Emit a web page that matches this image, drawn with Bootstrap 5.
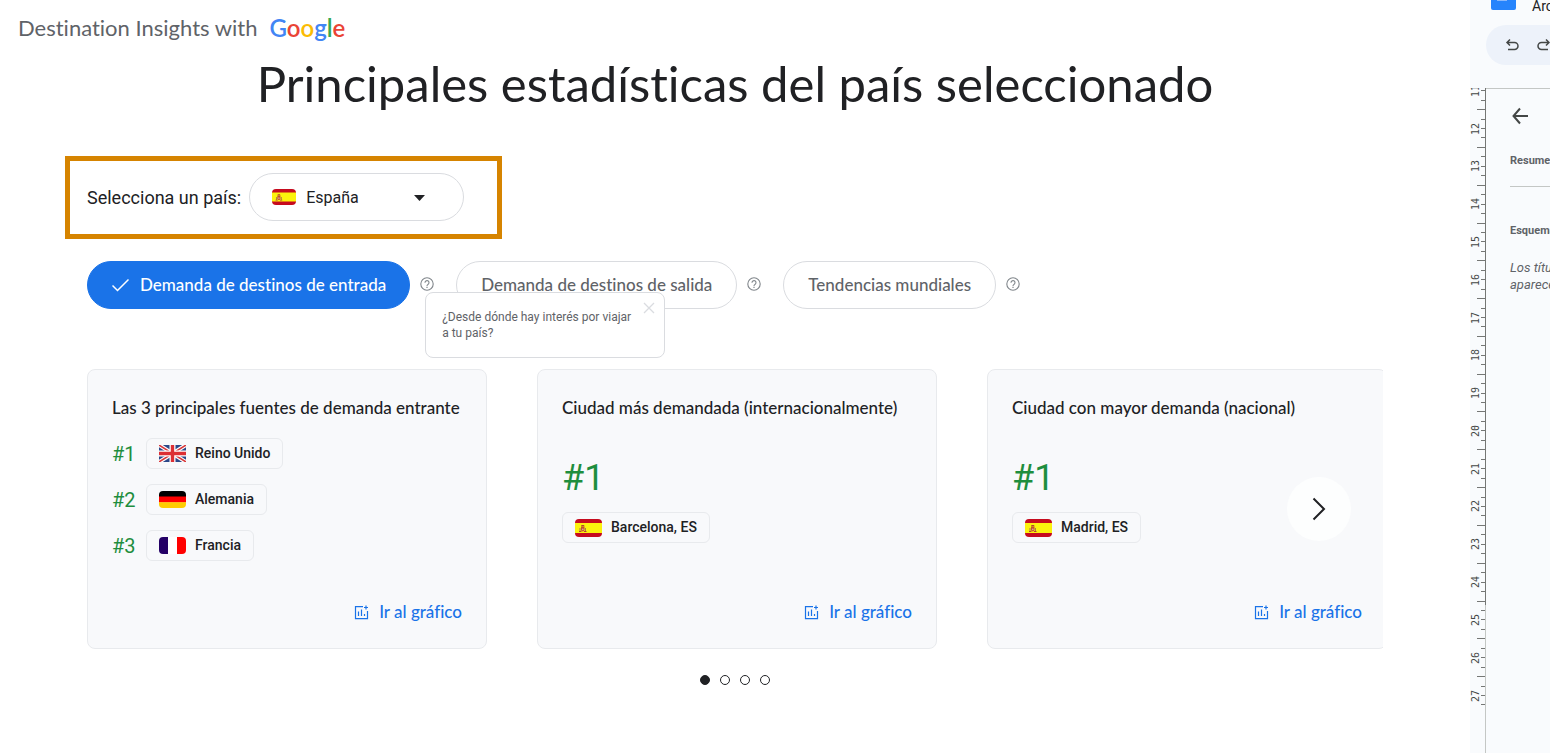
<!DOCTYPE html>
<html lang="es">
<head>
<meta charset="utf-8">
<meta name="viewport" content="width=device-width, initial-scale=1">
<title>Destination Insights with Google</title>
<link rel="stylesheet" href="https://cdn.jsdelivr.net/npm/bootstrap@5.3.0/dist/css/bootstrap.min.css">
<style>
  :root { --ink: #202124; --muted: #5f6368; --blue: #1a73e8; --green: #1e8e3e; --line: #dadce0; --soft: #e8eaed; }
  body { font-family: Roboto, "Liberation Sans", sans-serif; color: var(--ink); background: #fff; }
  svg { display: block; flex: none; }
  main { min-width: 0; }
  .display-font { font-family: Lato, Roboto, sans-serif; font-variant-ligatures: no-common-ligatures; }
  .site-head { padding: 12px 18px 0; font-size: 22px; line-height: 32px; color: var(--muted); gap: 12px; }
  .logo { font-size: 24px; font-weight: 600; }
  .c-blue { color: #4285f4; } .c-red { color: #ea4335; } .c-yellow { color: #fbbc04; } .c-green { color: #34a853; }
  h1 { font-size: 49px; line-height: 56px; font-weight: 400; margin: 11px 0 45px; text-align: center; }
  .content { padding: 0 87px; }
  .country-box { border: 5px solid #d68400; padding: 12px 33px 13px 17px; margin-left: -22px; gap: 8px; }
  .country-box label { font-size: 18px; }
  .country { width: 215px; }
  .country select { width: 100%; height: 48px; border: 1px solid var(--line); border-radius: 24px; background: #fff; padding: 2px 56px 0; font-size: 16px; color: var(--ink); appearance: none; }
  .country .flag { position: absolute; left: 23px; top: 16px; }
  .country .caret { position: absolute; right: 39px; top: 22px; }
  .tabs { margin-top: 22px; }
  .pill { height: 48px; border: 1px solid var(--line); border-radius: 24px; background: #fff; color: var(--muted); font-size: 17px; font-weight: 500; padding: 0 24px; gap: 11px; white-space: nowrap; }
  .pill.on { background: var(--blue); border-color: var(--blue); color: #fff; padding-right: 23px; }
  .help { margin: 0 22px 2px 10px; }
  .bare { border: 0; padding: 0; background: none; }
  .tip { position: absolute; left: 5px; top: 15px; z-index: 2; width: 240px; background: #fff; border: 1px solid var(--line); border-radius: 8px; padding: 16px; font-size: 12px; line-height: 16px; color: var(--muted); white-space: nowrap; }
  .tip p { margin-bottom: 0; }
  .tip button { position: absolute; right: 9px; top: 9px; }
  .deck { margin-top: 60px; gap: 50px; overflow: hidden; }
  .tile { flex: 0 0 400px; min-height: 280px; background: #f8f9fb; border: 1px solid var(--soft); border-radius: 8px; padding: 26px 24px 24px; }
  .tile h2 { font-size: 17px; line-height: 24px; font-weight: 500; margin: 0; white-space: nowrap; }
  .ranks { margin: 18px 0 0; padding: 0; list-style: none; gap: 15px; }
  .rank { color: var(--green); font-size: 20px; line-height: 24px; width: 34px; }
  .big-rank { color: var(--green); font-size: 36px; line-height: 40px; margin: 38px 0 14px; }
  .chip { height: 31px; border: 1px solid var(--soft); border-radius: 6px; padding: 0 12px; gap: 9px; font-size: 14px; font-weight: 500; }
  .go { color: var(--blue); font-size: 17px; line-height: 24px; font-weight: 500; gap: 10px; text-decoration: none; }
  .next { position: absolute; right: 32px; top: 50%; margin-top: -32px; width: 64px; height: 64px; border-radius: 50%; background: #fdfefe; }
  .dots { margin-top: 26px; gap: 10px; }
  .dots button { width: 10px; height: 10px; border: 1px solid var(--ink); border-radius: 50%; padding: 0; background: #fff; }
  .dots .now { background: var(--ink); }
  .doc { flex: 0 0 80px; overflow: hidden; background: #f9fbfd; white-space: nowrap; color: #444746; }
  .doc-head { height: 25px; padding-left: 21px; gap: 16px; color: var(--ink); font-size: 14px; line-height: 12px; }
  .doc-tools { height: 40px; width: 120px; margin: 0 0 23px 16px; padding-left: 18px; border-radius: 20px; background: #edf2fa; gap: 16px; }
  .outline { border-top: 1px solid #c4c7c5; padding: 18px 0 0 24px; width: 120px; color: var(--muted); font-size: 11px; line-height: 16px; }
  .outline h3 { font-size: 11px; line-height: 16px; font-weight: 700; margin: 28px 0 17px; }
  .outline hr { margin: 0 0 36px; opacity: 1; border-color: #c4c7c5; }
  .outline p { font-size: 13px; line-height: 17px; font-style: italic; margin: 20px 0 0; }
  .ruler text { font: 400 10px "DejaVu Sans Mono", monospace; fill: #444746; }
</style>
</head>
<body>
<svg width="0" height="0" class="position-absolute" aria-hidden="true">
  <symbol id="es" viewBox="0 0 27 18"><path fill="#c60b1e" d="M0 0h27v18H0z"/><path fill="#fbf20d" d="M0 4h27v10H0z"/><path d="M4.500 9h1v3.500h-1zM10 9h1v3.500h-1z" fill="#a8794c"/><path d="M6 7.500h3.500v3.500a1.800 1.800 0 0 1-3.500 0z" fill="#c3512d"/><path d="M6.500 6h2.500l.6 1.200H6zM4 12h2.500v1H4zM9 12h2.500v1H9z" fill="#b5432c"/><circle cx="7.800" cy="10.300" r=".9" fill="#d9a8a0"/></symbol>
  <symbol id="uk" viewBox="0 0 27 17"><path fill="#2b4788" d="M0 0h27v17H0z"/><path d="M0 0l27 17M27 0L0 17" stroke="#fff" stroke-width="4"/><path d="M0 0l27 17M27 0L0 17" stroke="#d8383a" stroke-width="1.500"/><path d="M13.500 0v17M0 8.500h27" stroke="#fff" stroke-width="6"/><path d="M13.500 0v17M0 8.500h27" stroke="#dc2f34" stroke-width="3.400"/></symbol>
  <symbol id="de" viewBox="0 0 27 17"><path d="M0 0h27v6H0z"/><path fill="#f00" d="M0 5.500h27v6H0z"/><path fill="#fc0" d="M0 11.300h27V17H0z"/></symbol>
  <symbol id="fr" viewBox="0 0 27 17"><path fill="#fff" d="M0 0h27v17H0z"/><path fill="#240066" d="M0 0h9v17H0z"/><path fill="#f00" d="M18 0h9v17h-9z"/></symbol>
  <symbol id="q" viewBox="0 0 14 14"><circle cx="7" cy="7" r="6.200" fill="none" stroke="#80868b" stroke-width="1.100"/><path d="M5 5.700a2 2 0 1 1 3.200 1.500C7.400 7.800 7 8 7 8.900" fill="none" stroke="#80868b" stroke-width="1.100"/><path d="M6.400 9.800h1.200V11H6.400z" fill="#80868b"/></symbol>
  <symbol id="chart" viewBox="0 0 15 15"><path d="M9 1.700H1.500v12h12V6" fill="none" stroke="#1a73e8" stroke-width="1.200"/><path d="M4.500 6.500V11M7.500 4.500V11M10.500 9v2M12 .5v4M10 2.500h4" fill="none" stroke="#1a73e8" stroke-width="1.200"/></symbol>
</svg>

<div class="d-flex min-vh-100">
  <main class="flex-grow-1">
    <header class="site-head display-font d-flex">
      <span>Destination Insights with</span>
      <span class="logo"><span class="c-blue">G</span><span class="c-red">o</span><span class="c-yellow">o</span><span class="c-blue">g</span><span class="c-green">l</span><span class="c-red">e</span></span>
    </header>
    <h1 class="display-font">Principales estadísticas del país seleccionado</h1>

    <div class="content">
      <div class="country-box d-inline-flex align-items-center align-top">
        <label for="country">Selecciona un país:</label>
        <div class="country position-relative">
          <select id="country"><option>España</option></select>
          <svg class="flag rounded-1" width="24" height="16"><use href="#es"/></svg>
          <svg class="caret" width="11" height="6" viewBox="0 0 11 6"><path d="M0 0h11L5.500 6z" fill="#202124"/></svg>
        </div>
      </div>

      <div class="tabs d-flex align-items-center">
        <button class="pill on display-font d-flex align-items-center"><svg width="17" height="14" viewBox="0 0 17 14" fill="none" stroke="#fff" stroke-width="1.500"><path d="M.5 7.500l5 5L16.500 1.500"/></svg>Demanda de destinos de entrada</button>
        <div class="help position-relative">
          <button class="bare d-block" aria-label="Ayuda"><svg width="14" height="14"><use href="#q"/></svg></button>
          <div class="tip" role="tooltip">
            <p>¿Desde dónde hay interés por viajar<br>a tu país?</p>
            <button class="bare" aria-label="Cerrar"><svg width="12" height="12" viewBox="0 0 12 12" stroke="#dadce0" stroke-width="1.300"><path d="M1 1l10 10M11 1L1 11"/></svg></button>
          </div>
        </div>
        <button class="pill display-font">Demanda de destinos de salida</button>
        <button class="help bare" aria-label="Ayuda"><svg width="14" height="14"><use href="#q"/></svg></button>
        <button class="pill display-font">Tendencias mundiales</button>
        <button class="help bare" aria-label="Ayuda"><svg width="14" height="14"><use href="#q"/></svg></button>
      </div>

      <div class="position-relative">
        <div class="deck d-flex">
          <section class="tile d-flex flex-column">
            <h2 class="display-font">Las 3 principales fuentes de demanda entrante</h2>
            <ol class="ranks d-flex flex-column">
              <li class="d-flex align-items-center"><span class="rank">#1</span><span class="chip d-flex align-items-center"><svg width="27" height="17"><use href="#uk"/></svg>Reino Unido</span></li>
              <li class="d-flex align-items-center"><span class="rank">#2</span><span class="chip d-flex align-items-center"><svg class="rounded-1" width="27" height="17"><use href="#de"/></svg>Alemania</span></li>
              <li class="d-flex align-items-center"><span class="rank">#3</span><span class="chip d-flex align-items-center"><svg class="rounded-1" width="27" height="17"><use href="#fr"/></svg>Francia</span></li>
            </ol>
            <a href="#" class="go display-font d-flex align-items-center align-self-end mt-auto"><svg width="15" height="15"><use href="#chart"/></svg>Ir al gráfico</a>
          </section>
          <section class="tile d-flex flex-column">
            <h2 class="display-font">Ciudad más demandada (internacionalmente)</h2>
            <div class="big-rank">#1</div>
            <span class="chip d-flex align-items-center align-self-start"><svg class="rounded-1" width="27" height="18"><use href="#es"/></svg>Barcelona, ES</span>
            <a href="#" class="go display-font d-flex align-items-center align-self-end mt-auto"><svg width="15" height="15"><use href="#chart"/></svg>Ir al gráfico</a>
          </section>
          <section class="tile d-flex flex-column">
            <h2 class="display-font">Ciudad con mayor demanda (nacional)</h2>
            <div class="big-rank">#1</div>
            <span class="chip d-flex align-items-center align-self-start"><svg class="rounded-1" width="27" height="18"><use href="#es"/></svg>Madrid, ES</span>
            <a href="#" class="go display-font d-flex align-items-center align-self-end mt-auto"><svg width="15" height="15"><use href="#chart"/></svg>Ir al gráfico</a>
          </section>
        </div>
        <button class="next bare d-flex align-items-center justify-content-center" aria-label="Siguiente"><svg width="14" height="24" viewBox="0 0 14 24" fill="none" stroke="#202124" stroke-width="2"><path d="M1.500 1.500L12 12 1.500 22.500"/></svg></button>
      </div>

      <div class="dots d-flex justify-content-center">
        <button class="now" aria-label="1"></button><button aria-label="2"></button><button aria-label="3"></button><button aria-label="4"></button>
      </div>
    </div>
  </main>

  <aside class="doc d-flex flex-column">
    <div class="doc-head d-flex">
      <svg width="25" height="10" viewBox="0 0 25 10"><path d="M0 0h25v8a2 2 0 0 1-2 2H2a2 2 0 0 1-2-2z" fill="#2684fc"/><path d="M6 0h10v1H6z" fill="#8ab8fb"/></svg>
      <span>Archivo</span>
    </div>
    <div class="doc-tools d-flex align-items-center">
      <svg width="16" height="16" viewBox="0 0 16 16" fill="none" stroke="#444746" stroke-width="1.500"><path d="M6 2.500L3 5.500l3 3M3 5.500h7.500a3.200 3.200 0 0 1 0 7H4"/></svg>
      <svg width="16" height="16" viewBox="0 0 16 16" fill="none" stroke="#444746" stroke-width="1.500"><path d="M10 2.500l3 3-3 3M13 5.500H5.500a3.200 3.200 0 0 0 0 7H12"/></svg>
    </div>
    <div class="d-flex flex-grow-1">
      <svg class="ruler" id="ruler" width="16" height="665" viewBox="0 88 16 665"></svg>
      <div class="outline">
        <svg width="18" height="18" viewBox="0 0 18 18" fill="none" stroke="#444746" stroke-width="2"><path d="M10 1.500L3.500 9l6.500 7.500M3 9h15"/></svg>
        <h3>Resumen</h3>
        <hr>
        <h3>Esquema</h3>
        <p>Los títulos<br>aparecerán</p>
      </div>
    </div>
  </aside>
</div>

<script src="https://cdn.jsdelivr.net/npm/bootstrap@5.3.0/dist/js/bootstrap.bundle.min.js"></script>
<script>
  // Vertical ruler: four ticks per centimetre, a long one at each half.
  const cm = 37.8, y11 = 90.7;
  let ticks = '', labels = '';
  for (let i = 0; i <= 65; i++) {
    const y = Math.round(y11 + i * cm / 4 - 0.5), long = i % 4 === 2;
    if (y < 706) ticks += `<path d="M${long ? 7 : 11} ${y + 0.5}H15" stroke="#757775"/>`;
  }
  for (let n = 11; n <= 27; n++) {
    const y = Math.round(y11 + (n - 11) * cm) + 6;
    labels += `<text transform="translate(9 ${y}) rotate(-90)">${n}</text>`;
  }
  document.getElementById('ruler').innerHTML =
    '<path d="M15.500 88V605" stroke="#757775"/><path d="M15.500 605V753" stroke="#c4c7c5"/>' + ticks + labels;
</script>
</body>
</html>
